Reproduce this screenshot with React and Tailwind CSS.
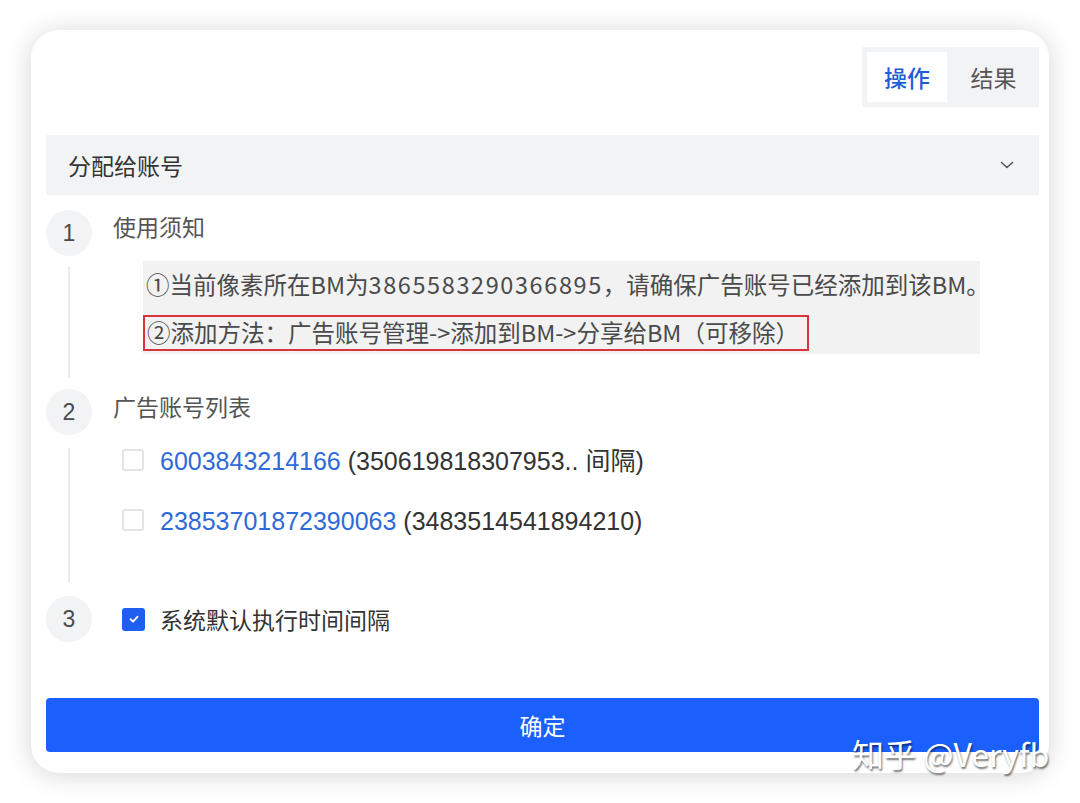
import React from "react";

const cjk = { fontFamily: '"Noto Sans CJK SC", "Noto Sans", sans-serif' };
const mix = { fontFamily: '"Liberation Sans", "Noto Sans CJK SC", sans-serif' };

function Circle({ n }) {
  return (
    <div className="w-[46px] h-[46px] shrink-0 rounded-full bg-[#f2f3f5] flex items-center justify-center text-[23px] text-[#4a4a4a]" style={mix}>
      {n}
    </div>
  );
}

function Checkbox({ checked }) {
  if (checked) {
    return (
      <div className="w-[23px] h-[23px] shrink-0 rounded-[3px] bg-[#1f5fef] flex items-center justify-center">
        <svg width="12" height="12" viewBox="0 0 12 12" fill="none">
          <path d="M2.5 6.2 L5 8.6 L9.6 3.6" stroke="white" strokeWidth="1.8" strokeLinecap="round" strokeLinejoin="round" />
        </svg>
      </div>
    );
  }
  return <div className="w-[22px] h-[22px] shrink-0 rounded-[3px] border-2 border-[#e4e4e6] bg-white" />;
}

export default function App() {
  return (
    <div className="relative w-[1080px] h-[803px] bg-white overflow-hidden" style={cjk}>
      <div className="pt-[30px] pl-[31px]">
        <div className="w-[1018px] h-[743px] bg-white rounded-[28px] shadow-[0_2px_26px_rgba(0,0,0,0.17)] pt-[17px] pl-[15px] pr-[10px] flex flex-col">
          {/* tabs */}
          <div className="flex justify-end">
            <div className="flex bg-[#f2f3f5] p-[5px] h-[60px]">
              <div className="w-[80px] h-[50px] bg-white flex items-center justify-center text-[23px] text-[#1f5fd6] font-medium">操作</div>
              <div className="w-[87px] h-[50px] flex items-center justify-center pl-[6px] text-[23px] text-[#555]">结果</div>
            </div>
          </div>
          {/* collapse header */}
          <div className="mt-[28px] h-[60px] bg-[#f2f3f5] flex items-center justify-between pl-[22px] pr-[24px]">
            <span className="text-[23px] text-[#333]">分配给账号</span>
            <svg width="16" height="16" viewBox="0 0 16 16" fill="none">
              <path d="M2.5 5.5 L8 10.5 L13.5 5.5" stroke="#555" strokeWidth="1.5" strokeLinecap="round" strokeLinejoin="round" />
            </svg>
          </div>

          {/* steps */}
          <div className="mt-[15px] flex flex-col">
            {/* step 1 */}
            <div className="flex gap-[21px]">
              <div className="w-[46px] flex flex-col items-center">
                <Circle n="1" />
                <div className="w-[2px] flex-1 bg-[#ebebeb] my-[11px]" />
              </div>
              <div className="flex-1 flex flex-col items-start pb-[35px]">
                <div className="h-[36px] -mt-[2px] mb-[2px] flex items-center text-[23px] text-[#555]">使用须知</div>
                <div className="mt-[15px] ml-[30px] w-[837px] h-[93px] bg-[#f2f2f2] pt-[6px] flex flex-col items-start text-[23.5px] text-[#4a4a4a]">
                  <div className="h-[36px] flex items-center pl-[3px] whitespace-nowrap">
                    ①当前像素所在BM为<span className="tracking-[1.6px]">3865583290366895</span>，请确保广告账号已经添加到该BM。
                  </div>
                  <div className="mt-[12px] flex h-[36px] items-center border-2 border-[#d8343c] pl-[2px] pr-[8px] whitespace-nowrap">②添加方法：广告账号管理-&gt;添加到BM-&gt;分享给BM（可移除）</div>
                </div>
              </div>
            </div>
            {/* step 2 */}
            <div className="flex gap-[21px]">
              <div className="w-[46px] flex flex-col items-center">
                <Circle n="2" />
                <div className="w-[2px] flex-1 bg-[#ebebeb] mt-[13px] mb-[13px]" />
              </div>
              <div className="flex-1 pb-[58px]">
                <div className="h-[36px] -mt-[1px] mb-[2px] flex items-center text-[23px] text-[#555]">广告账号列表</div>
                <div className="mt-[18px] ml-[9px] flex flex-col gap-[24px]">
                  <div className="h-[36px] flex items-center gap-[16px]">
                    <Checkbox />
                    <span className="text-[25px] text-[#333] whitespace-nowrap mt-[4px]" style={mix}>
                      <span className="text-[#2f6bd8]">6003843214166</span> (350619818307953.. 间隔)
                    </span>
                  </div>
                  <div className="h-[36px] flex items-center gap-[16px]">
                    <Checkbox />
                    <span className="text-[25px] text-[#333] whitespace-nowrap mt-[4px]" style={mix}>
                      <span className="text-[#2f6bd8]">23853701872390063</span> (3483514541894210)
                    </span>
                  </div>
                </div>
              </div>
            </div>
            {/* step 3 */}
            <div className="flex gap-[21px]">
              <div className="w-[46px] flex flex-col items-center">
                <Circle n="3" />
              </div>
              <div className="flex-1 flex items-center h-[46px] ml-[9px] gap-[15px]">
                <Checkbox checked />
                <span className="text-[23px] text-[#333]">系统默认执行时间间隔</span>
              </div>
            </div>
          </div>

          {/* button */}
          <div className="mt-[56px] h-[54px] rounded-[4px] bg-[#1b5ffd] flex items-center justify-center text-[23px] text-white">
            确定
          </div>
        </div>
      </div>

      {/* watermark */}
      <div className="absolute left-[852px] top-[729px] text-[32px] text-white whitespace-nowrap [text-shadow:1px_2px_2px_rgba(0,0,0,0.55)]" style={cjk}>
        知乎 @Veryfb
      </div>
    </div>
  );
}
